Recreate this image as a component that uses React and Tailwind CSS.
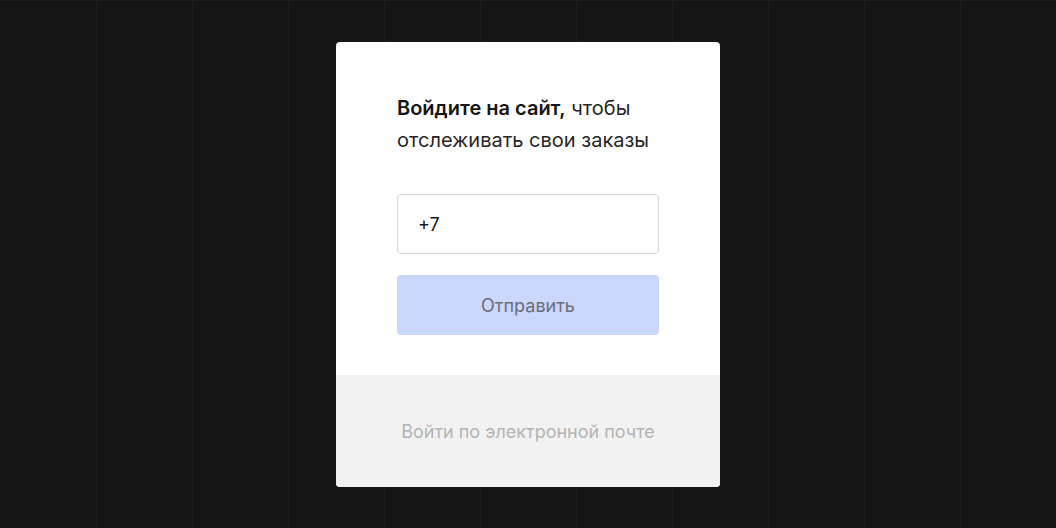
export default function App() {
  const cols = Array.from({ length: 11 });
  return (
    <div className="relative w-[1056px] h-[528px] overflow-hidden bg-[#151515]" style={{ fontFamily: "Inter, 'Noto Sans', sans-serif" }}>
      <div className="absolute inset-0 flex">
        {cols.map((_, i) => (
          <div key={i} className={`w-[96px] shrink-0 h-full border-t border-[#1d1d1d] ${i === 0 ? "" : "border-l"}`} />
        ))}
      </div>
      <div className="relative flex justify-center pt-[42px]">
        <div className="w-[384px] rounded-[4px] overflow-hidden bg-white flex flex-col">
          <div className="px-[61px] pt-[50px] pb-[40px] flex flex-col">
            <p className="text-[20px] leading-[32px] text-[#262626]">
              <span className="font-semibold text-[#161616]">Войдите на сайт,</span> чтобы
              <br />
              отслеживать свои заказы
            </p>
            <div className="mt-[38px] h-[60px] rounded-[4px] border border-[#d6d6d6] flex items-center px-[20px] text-[18px] text-[#1a1a1a]">
              +7
            </div>
            <div className="mt-[21px] h-[60px] rounded-[4px] bg-[#ccd7fe] flex items-center justify-center text-[18px] text-[#6a6d7c]">
              Отправить
            </div>
          </div>
          <div className="h-[112px] bg-[#f2f2f2] flex items-center justify-center text-[18px] text-[#b4b4b4]">
            Войти по электронной почте
          </div>
        </div>
      </div>
    </div>
  );
}
